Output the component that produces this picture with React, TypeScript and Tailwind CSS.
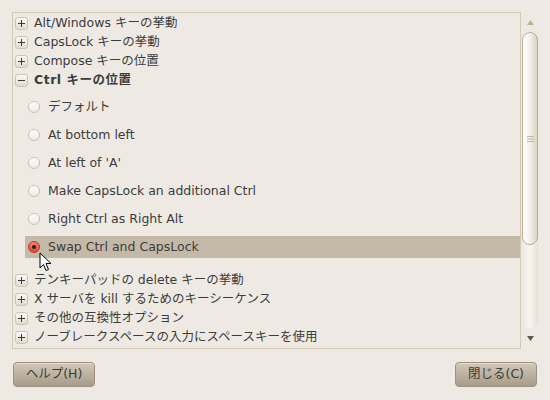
import React from 'react';

const font = { fontFamily: '"DejaVu Sans", "Noto Sans CJK JP", sans-serif' };

function Expander({ open }: { open?: boolean }) {
  return (
    <span className="flex h-[13px] w-[13px] items-center justify-center rounded-[3px] border border-[#cfc4b0] bg-gradient-to-b from-[#fbfaf7] to-[#e2dacb]">
      <svg width="9" height="9" viewBox="0 0 9 9">
        <rect x="1" y="4" width="7" height="1" fill="#3a3a3a" />
        {!open && <rect x="4" y="1" width="1" height="7" fill="#3a3a3a" />}
      </svg>
    </span>
  );
}

function TreeRow({ label, open }: { label: string; open?: boolean }) {
  return (
    <div className="flex h-[19px] items-center gap-[6px] pl-[2px]">
      <Expander open={open} />
      <span className={open ? 'font-bold tracking-[0.5px]' : ''}>{label}</span>
    </div>
  );
}

function Radio({ label, checked }: { label: string; checked?: boolean }) {
  return (
    <div className="flex h-[28px] items-center pl-[12px]">
      <div className={'flex h-[22px] flex-1 items-center gap-[8px] pl-[3px] ' + (checked ? 'bg-[#c4b9a7]' : '')}>
        {checked ? (
          <span className="flex h-[12px] w-[12px] items-center justify-center rounded-full border border-[#b8372a] bg-gradient-to-b from-[#f6836e] to-[#e0442e]">
            <span className="h-[4px] w-[4px] rounded-full bg-[#2a1a16]" />
          </span>
        ) : (
          <span className="h-[12px] w-[12px] rounded-full border border-[#cbc1b1] bg-gradient-to-b from-[#ffffff] to-[#efeae2]" />
        )}
        <span>{label}</span>
      </div>
    </div>
  );
}

function Button({ label }: { label: string }) {
  return (
    <button className="flex h-[25px] w-[82px] items-center justify-center rounded-[4px] border border-[#9d927f] bg-gradient-to-b from-[#d2c8b8] to-[#a79c8a] text-[12.5px] text-[#3b3b3b] shadow-[inset_0_1px_0_rgba(255,255,255,0.4)]">
      {label}
    </button>
  );
}

export default function App() {
  const radios = [
    'デフォルト',
    'At bottom left',
    "At left of 'A'",
    'Make CapsLock an additional Ctrl',
    'Right Ctrl as Right Alt',
  ];

  return (
    <div className="relative flex h-[400px] w-[550px] flex-col bg-[#eeeae3] text-[12.5px] text-[#3c3c3c]" style={font}>
      <div className="flex h-[349px] pl-[12px] pr-[12px] pt-[12px]">
        <div className="flex-1 overflow-hidden border border-[#d3c9b4] bg-[#eeeae3] pt-[1px]">
          <TreeRow label="Alt/Windows キーの挙動" />
          <TreeRow label="CapsLock キーの挙動" />
          <TreeRow label="Compose キーの位置" />
          <TreeRow label="Ctrl キーの位置" open />
          <div className="pb-[10px] pt-[3px]">
            {radios.map((r) => (
              <Radio key={r} label={r} />
            ))}
            <Radio label="Swap Ctrl and CapsLock" checked />
          </div>
          <TreeRow label="テンキーパッドの delete キーの挙動" />
          <TreeRow label="X サーバを kill するためのキーシーケンス" />
          <TreeRow label="その他の互換性オプション" />
          <TreeRow label="ノーブレークスペースの入力にスペースキーを使用" />
          <TreeRow label="" />
        </div>

        {/* scrollbar */}
        <div className="ml-[1px] flex w-[16px] flex-col items-center">
          <div className="flex h-[20px] items-center justify-center pt-[1px]">
            <svg width="7" height="5" viewBox="0 0 7 5">
              <path d="M3.5 0 L7 5 L0 5 Z" fill="#bcae95" />
            </svg>
          </div>
          <div className="relative flex h-[296px] w-[16px] flex-col rounded-b-[8px] rounded-t-[8px] bg-gradient-to-r from-[#ece8e0] via-[#f8f6f2] to-[#e6dfd3]">
            <div className="flex h-[213px] w-[16px] items-center justify-center rounded-[8px] border border-[#bdae95] bg-gradient-to-r from-[#ffffff] via-[#f4f0ea] to-[#ddd3c2]">
              <svg width="7" height="6" viewBox="0 0 7 6">
                <rect x="0" y="0" width="7" height="1" fill="#c3b59d" />
                <rect x="0" y="2.5" width="7" height="1" fill="#c3b59d" />
                <rect x="0" y="5" width="7" height="1" fill="#c3b59d" />
              </svg>
            </div>
          </div>
          <div className="flex h-[20px] items-center justify-center">
            <svg width="7" height="5" viewBox="0 0 7 5">
              <path d="M0 0 L7 0 L3.5 5 Z" fill="#5f574b" />
            </svg>
          </div>
        </div>
      </div>

      <div className="flex justify-between px-[13px] pt-[13px]">
        <Button label="ヘルプ(H)" />
        <Button label="閉じる(C)" />
      </div>

      {/* mouse pointer */}
      <svg className="absolute left-[39px] top-[252px]" width="13" height="20" viewBox="0 0 13 20">
        <path d="M1 1 L1 16 L4.5 12.5 L7 18.5 L9.5 17.5 L7 11.5 L12 11.5 Z" fill="#ffffff" stroke="#000000" strokeWidth="1" strokeLinejoin="round" />
      </svg>
    </div>
  );
}
